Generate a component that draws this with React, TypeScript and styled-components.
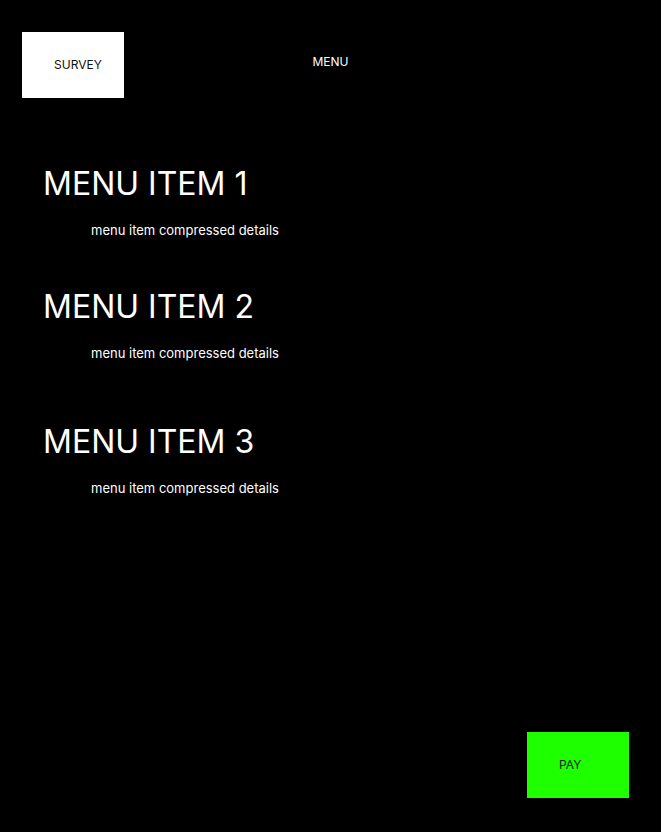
import styled, { createGlobalStyle } from "styled-components";

const GlobalStyle = createGlobalStyle`
    html, body {
        margin: 0;
        padding: 0;
        background: #000;
    }
    body {
        font-family: Inter, "Noto Sans", sans-serif;
        color: #fff;
    }
`

const Page = styled.div`
    display: flex;
    flex-direction: column;
    width: 661px;
    height: 832px;
    box-sizing: border-box;
    padding: 32px 32px 34px 22px;
    background: #000;
`

const Header = styled.header`
    display: grid;
    grid-template-columns: 1fr auto 1fr;
    align-items: start;
    margin-right: -10px;
`

const BoxButton = styled.button<{ $bg: string }>`
    display: flex;
    align-items: center;
    width: 102px;
    height: 66px;
    padding: 0 0 2px 32px;
    border: none;
    border-radius: 0;
    background: ${p => p.$bg};
    color: #111;
    font-family: Inter, "Noto Sans", sans-serif;
    font-size: 12px;
    cursor: pointer;
`

const MenuLabel = styled.div`
    padding-top: 22px;
    font-size: 12px;
    color: #fff;
`

const List = styled.ul`
    list-style: none;
    margin: 66px 0 0;
    padding: 0 0 0 21px;
    flex: 1;
`

const Item = styled.li<{ $gap: number }>`
    margin-top: ${p => p.$gap}px;
`

const Title = styled.h2`
    margin: 0;
    font-size: 32px;
    font-weight: 400;
    line-height: 39px;
`

const Details = styled.p`
    margin: 19px 0 0 48px;
    font-size: 13px;
    line-height: 16px;
`

const Footer = styled.footer`
    display: flex;
    justify-content: flex-end;
`

const items = [
    { title: "MENU ITEM 1", gap: 0 },
    { title: "MENU ITEM 2", gap: 49 },
    { title: "MENU ITEM 3", gap: 61 },
]

const App = () => {
    return <Page>
        <GlobalStyle />
        <Header>
            <div><BoxButton $bg="#fff">SURVEY</BoxButton></div>
            <MenuLabel>MENU</MenuLabel>
            <div />
        </Header>
        <List>
            {items.map(it => (
                <Item key={it.title} $gap={it.gap}>
                    <Title>{it.title}</Title>
                    <Details>menu item compressed details</Details>
                </Item>
            ))}
        </List>
        <Footer>
            <BoxButton $bg="#1eff00">PAY</BoxButton>
        </Footer>
    </Page>
}

export default App
